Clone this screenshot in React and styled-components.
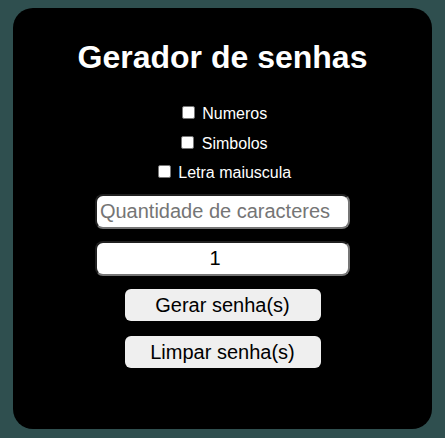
import styled, { createGlobalStyle } from "styled-components";

const GlobalStyle = createGlobalStyle`
  body {
    margin: 0;
    background: #2f4f4f;
    font-family: "Liberation Sans", Arial, sans-serif;
  }
`;

const Page = styled.div`
  padding: 8px 13px 9px;
`;

const Card = styled.main`
  height: 421px;
  box-sizing: border-box;
  background: #000;
  border-radius: 20px;
  padding-top: 31px;
  display: flex;
  flex-direction: column;
  align-items: center;
`;

const Title = styled.h1`
  margin: 0;
  color: #fff;
  font-size: 32px;
  line-height: 37px;
  font-weight: bold;
`;

const Options = styled.div`
  margin-top: 27px;
  display: flex;
  flex-direction: column;
  gap: 9.5px;
`;

const Option = styled.label`
  height: 20px;
  line-height: 20px;
  text-align: center;
  color: #fff;
  font-size: 16px;
`;

const Check = styled.input`
  appearance: none;
  width: 13px;
  height: 13px;
  box-sizing: border-box;
  margin: 3px 3px 3px 4px;
  border: 1px solid #767676;
  border-radius: 2px;
  background: #fff;
  vertical-align: -3px;
`;

const Field = styled.input`
  margin-top: ${({ $gap }) => $gap}px;
  width: 255px;
  height: 35px;
  box-sizing: border-box;
  border: 2px inset #767676;
  border-radius: 8px;
  padding: 1px 2px;
  background: #fff;
  color: #000;
  font-family: "Liberation Sans", Arial, sans-serif;
  font-size: 20px;
  text-align: center;
  &::placeholder {
    color: #757575;
  }
`;

const Button = styled.button`
  margin-top: ${({ $gap }) => $gap}px;
  width: 196px;
  height: 32px;
  border: none;
  border-radius: 6px;
  background: #efefef;
  color: #000;
  font-family: "Liberation Sans", Arial, sans-serif;
  font-size: 20px;
  padding: 0;
`;

export default function App() {
  return (
    <>
      <GlobalStyle />
      <Page>
        <Card>
          <Title>Gerador de senhas</Title>
          <Options>
            <Option>
              <Check type="checkbox" /> Numeros
            </Option>
            <Option>
              <Check type="checkbox" /> Simbolos
            </Option>
            <Option>
              <Check type="checkbox" /> Letra maiuscula
            </Option>
          </Options>
          <Field $gap={12} type="number" placeholder="Quantidade de caracteres" />
          <Field $gap={12} type="number" defaultValue={1} />
          <Button $gap={13}>Gerar senha(s)</Button>
          <Button $gap={15}>Limpar senha(s)</Button>
        </Card>
      </Page>
    </>
  );
}
